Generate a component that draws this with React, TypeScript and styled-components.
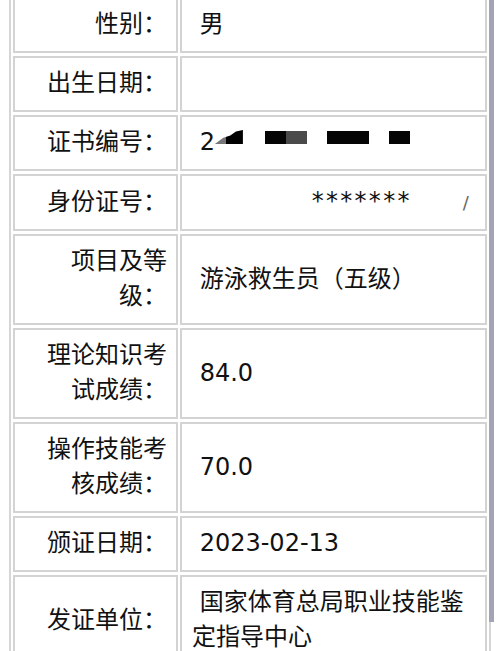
import styled, { createGlobalStyle } from "styled-components";

const GlobalStyle = createGlobalStyle`
	html,
	body {
		margin: 0;
		padding: 0;
		background: #fff;
		overflow: hidden;
	}
	body {
		margin-top: -8px;
	}
`;

const Page = styled.div`
	padding-left: 9px;
	font-family: "DejaVu Sans", "Noto Sans CJK SC", sans-serif;
	font-size: 24px;
	color: #111;
`;

const InfoTable = styled.table`
	width: 482px;
	table-layout: fixed;
	border-collapse: separate;
	border-spacing: 2px 3px;
	border: 2px solid #d6d6d6;
`;

const Label = styled.th`
	box-sizing: border-box;
	width: 165px;
	padding: 8px 9px 9px 10px;
	border: 2px solid #d3d3d3;
	line-height: 35px;
	font-weight: normal;
	text-align: right;
	vertical-align: middle;
`;

const Value = styled.td`
	box-sizing: border-box;
	width: 307px;
	padding: 8px 10px 9px 10px;
	border: 2px solid #d3d3d3;
	line-height: 35px;
	text-align: left;
	vertical-align: middle;
`;

/* white-painted part of the photo */
const Erased = styled.span<{ $w: number }>`
	display: inline-block;
	width: ${(p) => p.$w}px;
	height: 1px;
`;

/* black mosaic bars over the certificate number */
const Redact = styled.span<{ $w: number; $gap?: number; $split?: boolean }>`
	display: inline-block;
	width: ${(p) => p.$w}px;
	height: 13px;
	margin-left: ${(p) => p.$gap ?? 0}px;
	vertical-align: 6px;
	background: ${(p) =>
		p.$split ? "linear-gradient(90deg, #050505 50%, #4a4a4a 50%)" : "#050505"};
`;

const Smudge = styled.span`
	display: inline-block;
	width: 28px;
	height: 14px;
	vertical-align: 6px;
	background: linear-gradient(90deg, #777 0 40%, #000 40%);
	clip-path: polygon(0 100%, 30% 55%, 55% 40%, 75% 10%, 100% 0, 100% 100%);
`;

const Stars = styled.span`
	letter-spacing: 2.3px;
`;

const Remnant = styled.span`
	font-size: 18px;
	color: #666;
`;

const Thumb = styled.div`
	position: fixed;
	top: 0;
	right: 6px;
	width: 5px;
	height: 622px;
	background: #a3a3b6;
`;

const SP = "\u00a0";

const rows: { label: string; value: React.ReactNode }[] = [
	{ label: "性别：", value: SP + "男" },
	{ label: "出生日期：", value: SP },
	{
		label: "证书编号：",
		value: (
			<>
				{SP + "2"}
				<Smudge />
				<Redact $w={42} $gap={22} $split />
				<Redact $w={42} $gap={20} />
				<Redact $w={21} $gap={20} />
			</>
		),
	},
	{
		label: "身份证号：",
		value: (
			<>
				{SP}
				<Erased $w={112} />
				<Stars>*******</Stars>
				<Erased $w={51} />
				<Remnant>/</Remnant>
			</>
		),
	},
	{ label: "项目及等级：", value: SP + "游泳救生员（五级）" },
	{ label: "理论知识考试成绩：", value: SP + "84.0" },
	{ label: "操作技能考核成绩：", value: SP + "70.0" },
	{ label: "颁证日期：", value: SP + "2023-02-13" },
	{ label: "发证单位：", value: SP + "国家体育总局职业技能鉴定指导中心" },
];

const App = () => {
	return (
		<Page>
			<GlobalStyle />
			<InfoTable>
				<tbody>
					{rows.map((r) => (
						<tr key={r.label}>
							<Label>{r.label}</Label>
							<Value>{r.value}</Value>
						</tr>
					))}
				</tbody>
			</InfoTable>
			<Thumb />
		</Page>
	);
};

export default App;
